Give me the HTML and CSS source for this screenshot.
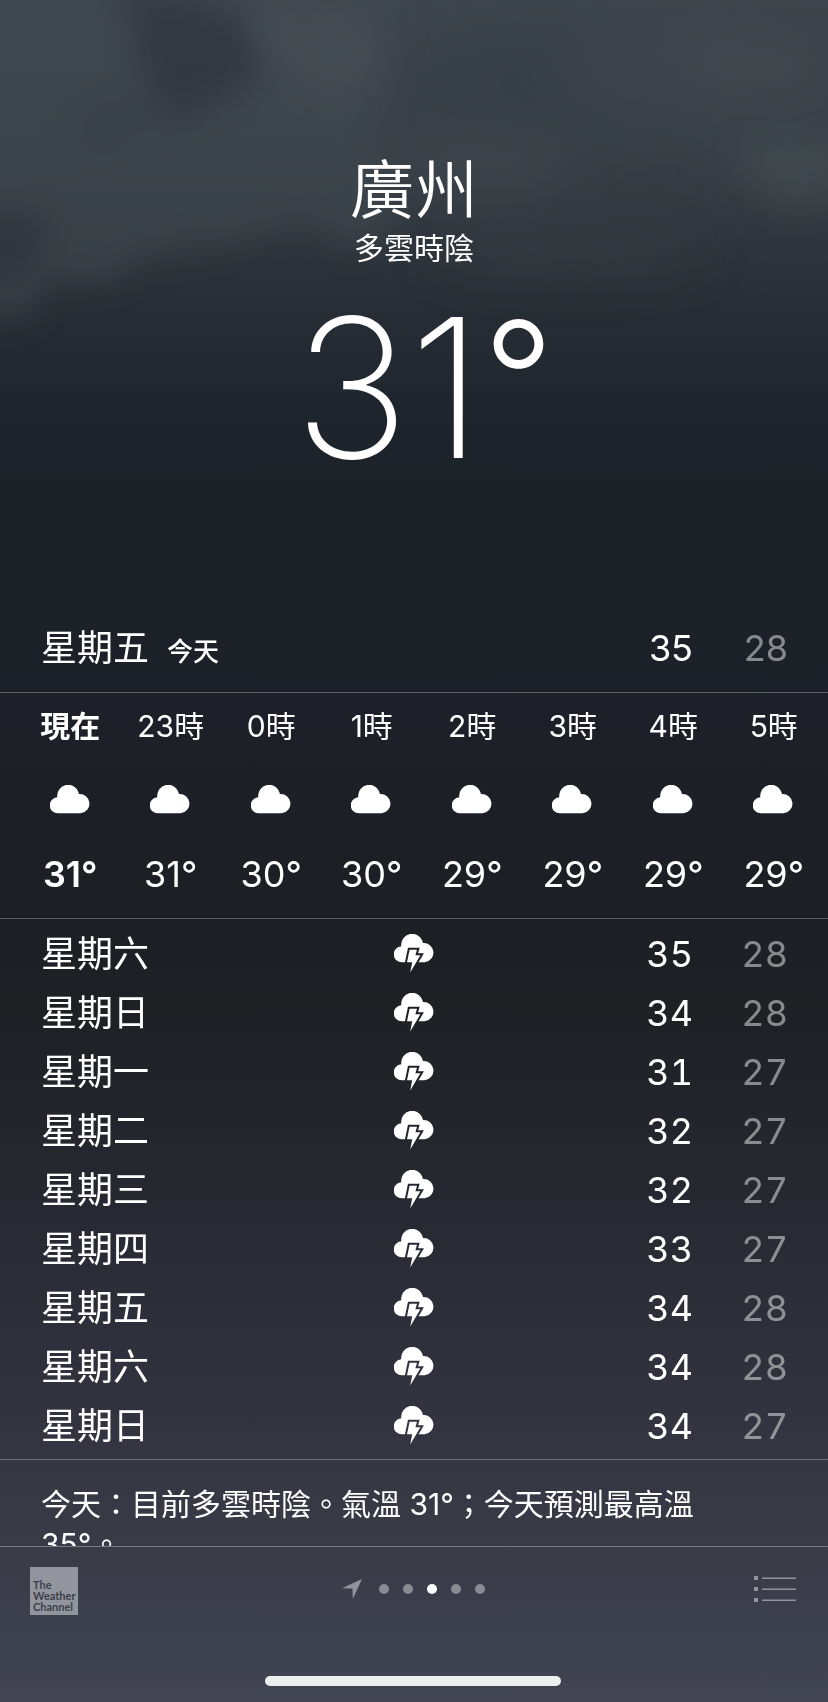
FILE: index.html
```html
<!DOCTYPE html>
<html lang="zh-Hant">
<head>
<meta charset="utf-8">
<meta name="viewport" content="width=device-width, initial-scale=1">
<title>天氣 – 廣州</title>
<link rel="stylesheet" href="styles.css">
</head>
<body>
<svg class="defs" aria-hidden="true">
  <defs>
    <path id="cloud-shape" d="M8.2 28.3a8 8 0 0 1-.9-16 10.9 10.9 0 0 1 21.6-3.2 9.6 9.6 0 1 1 1.8 19.2z"/>
    <path id="bolt-shape" d="M15.6 15.8H23L21.4 21.3H26.4L16.2 38.5 18.2 28.3H13z"/>
    <mask id="bolt-cut" maskUnits="userSpaceOnUse" x="0" y="0" width="41" height="39">
      <rect width="41" height="39" fill="#fff"/>
      <use href="#bolt-shape" fill="#000" stroke="#000" stroke-width="4"/>
    </mask>
    <symbol id="cloud" viewBox="0 0 41 29"><use href="#cloud-shape"/></symbol>
    <symbol id="storm" viewBox="0 0 41 39"><use href="#cloud-shape" mask="url(#bolt-cut)"/><use href="#bolt-shape"/></symbol>
  </defs>
</svg>

<svg class="sky" viewBox="0 0 828 620" preserveAspectRatio="none" aria-hidden="true">
  <defs>
    <filter id="soft" x="-60%" y="-100%" width="220%" height="300%" color-interpolation-filters="sRGB"><feGaussianBlur stdDeviation="24"/></filter>
    <filter id="wisp" x="-30%" y="-30%" width="160%" height="160%" color-interpolation-filters="sRGB">
      <feTurbulence type="fractalNoise" baseFrequency="0.018" numOctaves="4" seed="4" result="n"/>
      <feDisplacementMap in="SourceGraphic" in2="n" scale="50" xChannelSelector="R" yChannelSelector="G" result="d"/>
      <feGaussianBlur in="d" stdDeviation="15"/>
    </filter>
  </defs>
  <g filter="url(#soft)">
    <ellipse cx="560" cy="80" rx="150" ry="50" fill="#343b42" opacity=".45"/>
    <ellipse cx="700" cy="70" rx="140" ry="40" fill="#424a50" opacity=".6"/>
    <ellipse cx="480" cy="165" rx="90" ry="30" fill="#424a50" opacity=".6"/>
    <ellipse cx="570" cy="250" rx="130" ry="26" fill="#363e45" opacity=".6"/>
    <ellipse cx="790" cy="165" rx="60" ry="26" fill="#465056" opacity=".6"/>
  </g>
  <g filter="url(#wisp)">
    <path d="M-60 -60H420L390 60 370 130 400 210 380 250 310 225 240 235 170 255 110 285 60 275 20 310 -60 330z" fill="#414a50" opacity=".6"/>
    <path d="M240 10L370 20 380 80 330 90 260 60z" fill="#4a5359" opacity=".4"/>
    <path d="M110 -30L230 10 260 70 205 120 150 110 130 60z" fill="#2c313a" opacity=".6"/>
    <path d="M60 110L130 90 150 130 90 150z" fill="#2c323a" opacity=".25"/>
    <path d="M-40 200L30 210 40 260 0 290 -40 290z" fill="#282c34" opacity=".5"/>
    <path d="M740 160L860 130 860 200 770 210z" fill="#4a5359" opacity=".25"/>
  </g>
</svg>

<main class="weather">
  <header class="current">
    <h1 class="city">廣州</h1>
    <p class="condition">多雲時陰</p>
    <p class="temperature">31<span class="degree">°</span></p>
  </header>

  <section class="today">
    <h2 class="today-day">星期五</h2>
    <span class="today-label">今天</span>
    <span class="today-high">35</span>
    <span class="today-low">28</span>
  </section>

  <table class="hourly">
    <thead>
      <tr><th scope="col" class="now">現在</th><th scope="col">23時</th><th scope="col">0時</th><th scope="col">1時</th><th scope="col">2時</th><th scope="col">3時</th><th scope="col">4時</th><th scope="col">5時</th></tr>
    </thead>
    <tbody>
      <tr class="hour-icons">
        <td><svg class="cloud-icon" role="img" aria-label="多雲"><use href="#cloud"/></svg></td>
        <td><svg class="cloud-icon" role="img" aria-label="多雲"><use href="#cloud"/></svg></td>
        <td><svg class="cloud-icon" role="img" aria-label="多雲"><use href="#cloud"/></svg></td>
        <td><svg class="cloud-icon" role="img" aria-label="多雲"><use href="#cloud"/></svg></td>
        <td><svg class="cloud-icon" role="img" aria-label="多雲"><use href="#cloud"/></svg></td>
        <td><svg class="cloud-icon" role="img" aria-label="多雲"><use href="#cloud"/></svg></td>
        <td><svg class="cloud-icon" role="img" aria-label="多雲"><use href="#cloud"/></svg></td>
        <td><svg class="cloud-icon" role="img" aria-label="多雲"><use href="#cloud"/></svg></td>
      </tr>
      <tr class="hour-temps"><td class="now">31°</td><td>31°</td><td>30°</td><td>30°</td><td>29°</td><td>29°</td><td>29°</td><td>29°</td></tr>
    </tbody>
  </table>

  <div class="daily-wrap">
    <table class="daily">
      <colgroup><col class="col-day"><col class="col-icon"><col><col class="col-low"></colgroup>
      <tbody>
        <tr><th scope="row">星期六</th><td class="icon"><svg class="storm-icon" role="img" aria-label="雷雨"><use href="#storm"/></svg></td><td>35</td><td class="low">28</td></tr>
        <tr><th scope="row">星期日</th><td class="icon"><svg class="storm-icon" role="img" aria-label="雷雨"><use href="#storm"/></svg></td><td>34</td><td class="low">28</td></tr>
        <tr><th scope="row">星期一</th><td class="icon"><svg class="storm-icon" role="img" aria-label="雷雨"><use href="#storm"/></svg></td><td>31</td><td class="low">27</td></tr>
        <tr><th scope="row">星期二</th><td class="icon"><svg class="storm-icon" role="img" aria-label="雷雨"><use href="#storm"/></svg></td><td>32</td><td class="low">27</td></tr>
        <tr><th scope="row">星期三</th><td class="icon"><svg class="storm-icon" role="img" aria-label="雷雨"><use href="#storm"/></svg></td><td>32</td><td class="low">27</td></tr>
        <tr><th scope="row">星期四</th><td class="icon"><svg class="storm-icon" role="img" aria-label="雷雨"><use href="#storm"/></svg></td><td>33</td><td class="low">27</td></tr>
        <tr><th scope="row">星期五</th><td class="icon"><svg class="storm-icon" role="img" aria-label="雷雨"><use href="#storm"/></svg></td><td>34</td><td class="low">28</td></tr>
        <tr><th scope="row">星期六</th><td class="icon"><svg class="storm-icon" role="img" aria-label="雷雨"><use href="#storm"/></svg></td><td>34</td><td class="low">28</td></tr>
        <tr><th scope="row">星期日</th><td class="icon"><svg class="storm-icon" role="img" aria-label="雷雨"><use href="#storm"/></svg></td><td>34</td><td class="low">27</td></tr>
      </tbody>
    </table>
  </div>

  <p class="summary">今天：目前多雲時陰。氣溫 31°；今天預測最高溫 35°。</p>
</main>

<footer class="toolbar">
  <div class="toolbar-row">
    <a class="provider" href="#">The<br>Weather<br>Channel</a>
    <nav class="pager" aria-label="城市">
      <button class="page-here" type="button" aria-label="目前位置"><svg viewBox="0 0 20 20" width="20" height="20"><path d="M20 0L0 9.2 10.4 9.6 10.8 20z"/></svg></button>
      <button class="page-dot" type="button" aria-label="第 1 頁"></button>
      <button class="page-dot" type="button" aria-label="第 2 頁"></button>
      <button class="page-dot active" type="button" aria-label="第 3 頁" aria-current="page"></button>
      <button class="page-dot" type="button" aria-label="第 4 頁"></button>
      <button class="page-dot" type="button" aria-label="第 5 頁"></button>
    </nav>
    <button class="list-button" type="button" aria-label="城市列表">
      <svg viewBox="0 0 42 27" width="42" height="27"><path d="M0 0h4v4H0zM0 11h4v4H0zM0 22h4v4H0zM8 1.5h34v1.4H8zM8 12.5h34v1.4H8zM8 23.5h34v1.4H8z"/></svg>
    </button>
  </div>
  <div class="home-bar"></div>
</footer>
</body>
</html>
```

FILE: styles.css
```css
* {
  box-sizing: border-box;
}

html {
  height: 100%;
}

body {
  margin: 0;
  height: 100vh;
  display: flex;
  flex-direction: column;
  position: relative;
  overflow: hidden;
  color: #fff;
  font-family: Inter, "Noto Sans CJK TC", sans-serif;
  background: linear-gradient(
    #3e464d 0%,
    #394148 8%,
    #31383f 13%,
    #272e35 18%,
    #1e252c 24%,
    #1c2128 30%,
    #1d2028 42%,
    #1d1f25 52%,
    #1f2024 59%,
    #272932 71%,
    #343541 85%,
    #393c47 91%,
    #424453 100%
  );
}

h1,
h2,
p {
  margin: 0;
  font-weight: 400;
}

button {
  padding: 0;
  border: 0;
  background: none;
}

svg {
  display: block;
  fill: currentColor;
}

table {
  width: 100%;
  table-layout: fixed;
  border-collapse: collapse;
}

th,
td {
  padding: 0;
  font-weight: 400;
}

.defs {
  position: absolute;
  width: 0;
  height: 0;
}

.sky {
  position: absolute;
  top: 0;
  left: 0;
  width: 100%;
  height: 620px;
  z-index: -1;
}

.weather {
  flex: 1;
  min-height: 0;
  overflow: hidden;
}

.current {
  display: flex;
  flex-direction: column;
  align-items: center;
  height: 604px;
  padding-top: 152px;
}

.city {
  font-size: 64px;
  line-height: 76px;
  font-weight: 350;
}

.condition {
  font-size: 30px;
  line-height: 40px;
}

.temperature {
  padding-left: 20px;
  font-size: 194px;
  line-height: 240px;
  font-weight: 200;
}

.degree {
  font-size: 156px;
  line-height: 1;
  font-weight: 300;
  vertical-align: 24px;
}

.today {
  display: flex;
  align-items: baseline;
  height: 88px;
  padding: 16px 40px 0 41px;
  font-size: 36px;
  line-height: 56px;
}

.today-day {
  font-size: 36px;
}

.today-label {
  flex: 1;
  margin-left: 18px;
  font-size: 26px;
  font-weight: 500;
}

.today-low {
  width: 95px;
  text-align: right;
}

.today-low,
.low {
  color: rgba(255, 255, 255, .47);
}

.hourly {
  display: block;
  border-top: 1px solid #5e6168;
  border-bottom: 1px solid #5a5c61;
  padding: 13px 4px 20px 20px;
}

.hourly thead,
.hourly tbody {
  display: block;
}

.hourly tr {
  display: grid;
  grid-template-columns: repeat(8, 1fr);
  text-align: center;
}

.hourly th {
  font-size: 30px;
  line-height: 40px;
}

.hourly .now {
  font-weight: 600;
}

.hourly .hour-icons {
  padding: 39px 0 36px;
}

.cloud-icon {
  width: 41px;
  height: 29px;
  margin: 0 auto;
}

.hour-temps td {
  font-size: 36px;
  line-height: 48px;
}

.daily-wrap {
  padding: 5px 0 4px;
  border-bottom: 1px solid #6a6c76;
}

.col-day {
  width: 40%;
}

.col-icon {
  width: 20%;
}

.col-low {
  width: 135px;
}

.daily tr {
  height: 59px;
}

.daily th,
.daily td {
  font-size: 36px;
  line-height: 56px;
  text-align: right;
  font-variant-numeric: tabular-nums;
}

.daily th {
  padding-left: 41px;
  text-align: left;
}

.daily .icon {
  padding-left: 2px;
}

.daily .low {
  padding-right: 40px;
}

.storm-icon {
  width: 41px;
  height: 39px;
  margin: 0 auto;
}

.summary {
  padding: 24px 100px 0 41px;
  font-size: 30px;
  line-height: 40px;
}

.toolbar {
  border-top: 1px solid #767983;
  padding: 20px 32px 16px 30px;
  color: #92949c;
}

.toolbar-row {
  display: grid;
  grid-template-columns: 1fr auto 1fr;
  align-items: start;
}

.provider {
  width: 48px;
  height: 48px;
  padding: 12px 0 0 3px;
  background: #92959d;
  color: #3c3f4a;
  font-family: Lato, sans-serif;
  font-size: 11px;
  line-height: 11px;
  font-weight: 700;
  text-decoration: none;
}

.pager {
  display: flex;
  align-items: center;
  gap: 14px;
  height: 44px;
}

.page-here {
  margin-right: 3px;
  color: inherit;
}

.page-dot {
  width: 10px;
  height: 10px;
  border-radius: 50%;
  background: #898b94;
}

.page-dot.active {
  background: #fff;
}

.list-button {
  justify-self: end;
  margin-top: 9px;
  color: inherit;
}

.home-bar {
  width: 296px;
  height: 10px;
  margin: 61px auto 0;
  border-radius: 5px;
  background: #efeff0;
}
```
